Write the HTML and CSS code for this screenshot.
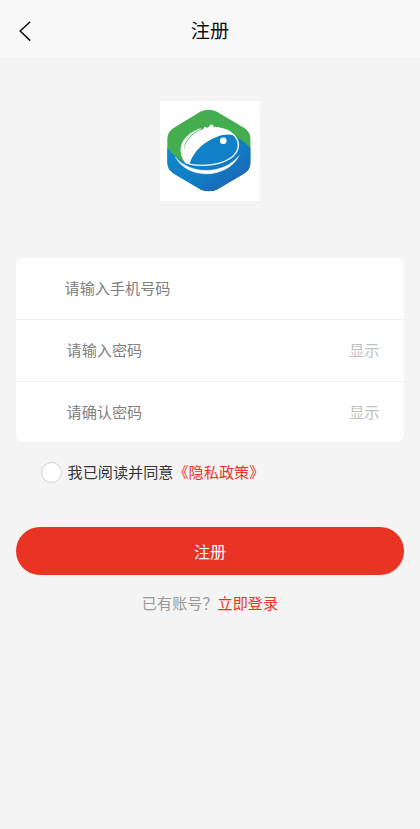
FILE: index.html
```html
<!DOCTYPE html>
<html lang="zh-CN">
<head>
<meta charset="utf-8">
<meta name="viewport" content="width=device-width, initial-scale=1">
<title>注册</title>
<link rel="stylesheet" href="styles.css">
</head>
<body>
<header class="navbar">
  <svg class="back" viewBox="0 0 14 22" aria-hidden="true"><path d="M12.2 1.7 2.2 11l10 9.6"/></svg>
  <h1 class="title">注册</h1>
  <span></span>
</header>
<main class="page">
  <svg class="logo" viewBox="15.5 17 301 301" aria-hidden="true">
    <defs>
      <linearGradient id="sea" x1="0" y1="0" x2="1" y2="1"><stop offset="0" stop-color="#098fd0"/><stop offset=".55" stop-color="#127bc4"/><stop offset="1" stop-color="#2458aa"/></linearGradient>
      <clipPath id="hex"><path d="M136 49Q161 37 186 49L268 98Q287 110 287 133V200Q287 222 268 234L188 281Q162 294 136 281L56 234Q37 222 37 200V133Q37 110 56 98Z"/></clipPath>
    </defs>
    <rect x="15" y="16" width="303" height="303" fill="#fff"/>
    <g clip-path="url(#hex)">
      <rect x="30" y="35" width="265" height="260" fill="#43ad50"/>
      <path d="M30 148Q48 172 68 188L105 209L225 116Q267 133 295 167V300H30Z" fill="url(#sea)"/>
    </g>
    <path d="M94 205C150 225 240 200 247 155C249 138 246 126 237 120Q210 111 172 130Q119 157 101 207Z" fill="#1080c8"/>
    <path d="M98 205C72 163 97 117 146 100L149 94L157 97Q163 96 165 90Q170 85 175 91L177 96L182 93L184 97L192 95L191 99Q225 105 237 120Q210 111 172 130Q119 157 103 207Z" fill="#fff"/>
    <path d="M92 203C62 160 82 118 138 99Q88 125 87 160Q87 182 98 204Z" fill="#fff" stroke="#fff" stroke-width="1.5"/>
    <path d="M184 97C236 102 262 137 245 169C227 201 166 217 103 206" fill="none" stroke="#fff" stroke-width="4"/>
    <path d="M61 184C105 239 205 239 253 180C217 251 98 255 61 184Z" fill="#fff" stroke="#fff" stroke-width="1"/>
    <circle cx="205" cy="136" r="10" fill="#fff"/>
  </svg>
  <form class="card">
    <div class="row phone"><span>请输入手机号码</span></div>
    <div class="row"><span>请输入密码</span><span class="show">显示</span></div>
    <div class="row"><span>请确认密码</span><span class="show">显示</span></div>
  </form>
  <div class="agree"><i class="radio"></i><span>我已阅读并同意</span><a class="link">《隐私政策》</a></div>
  <button class="submit" type="button">注册</button>
  <p class="login">已有账号？<a class="link">立即登录</a></p>
</main>
</body>
</html>
```
FILE: styles.css
```css
* { box-sizing: border-box; }
body {
  margin: 0;
  min-height: 829px;
  background: #f4f4f4;
  color: #333;
  font: 15.15px/22px "Noto Sans CJK SC", sans-serif;
}
.navbar {
  height: 57px;
  padding: 5px 18px 0;
  display: grid;
  grid-template-columns: 14px 1fr 14px;
  align-items: center;
  background: #f8f8f8;
}
.back { width: 14px; height: 22px; fill: none; stroke: #111; stroke-width: 1.5; }
.title { margin: -2px 0 0; text-align: center; font-size: 19.2px; line-height: 28px; font-weight: 400; color: #111; }
.page { padding: 43.5px 16px 0; }
.logo { display: block; width: 100.5px; height: 100.5px; margin: 0 auto; }
.card { margin: 56.5px 0 0; border-radius: 8px; background: #fff; overflow: hidden; }
.row {
  height: 61.5px;
  padding: 0 24.5px 2px 50.5px;
  display: flex;
  align-items: center;
  justify-content: space-between;
  color: #808080;
}
.row + .row { border-top: 1.5px solid #f3f3f3; }
.row.phone { padding-left: 48.5px; }
.show { color: #bfbfbf; }
.agree { height: 22px; margin-top: 19px; padding-left: 24.5px; display: flex; align-items: center; }
.agree span, .agree a { margin-top: -2px; }
.radio { width: 21px; height: 21px; margin-right: 6px; border: 1px solid #d1d1d1; border-radius: 50%; background: #fff; }
.link { color: #e93323; }
.submit {
  display: block;
  width: 100%;
  height: 48px;
  margin-top: 44.3px;
  padding: 0 0 1px;
  border: 0;
  border-radius: 24px;
  background: #e93323;
  color: #fff;
  font: 16px/24px "Noto Sans CJK SC", sans-serif;
}
.login { margin: 16px 0 0; text-align: center; color: #999; }
```
